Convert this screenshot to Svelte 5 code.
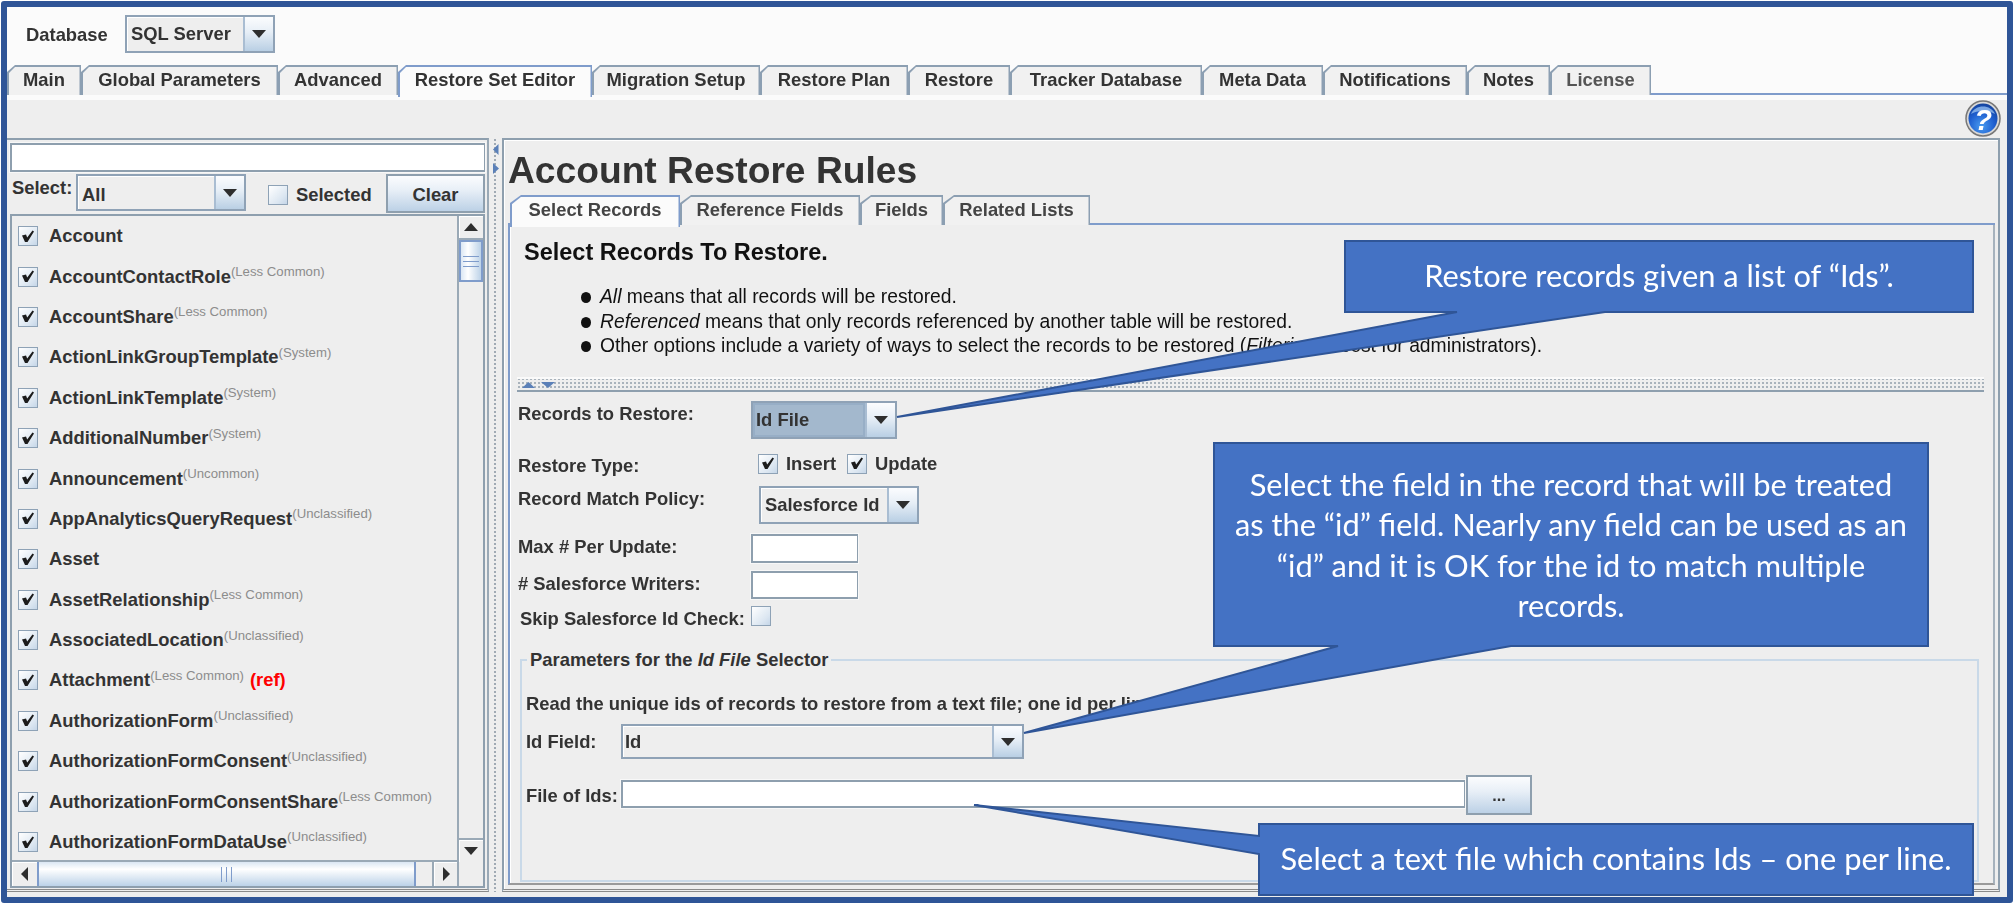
<script>
  const mainTabs = [
    ['Main', 74], ['Global Parameters', 197], ['Advanced', 120], ['Restore Set Editor', 194, 'active'],
    ['Migration Setup', 168], ['Restore Plan', 148], ['Restore', 102], ['Tracker Database', 192],
    ['Meta Data', 121], ['Notifications', 144], ['Notes', 83], ['License', 101, 'off']
  ];
  const subTabs = [['Select Records', 170, 'active'], ['Reference Fields', 180], ['Fields', 83], ['Related Lists', 147]];
  const rows = [
    ['Account', ''], ['AccountContactRole', 'Less Common'], ['AccountShare', 'Less Common'],
    ['ActionLinkGroupTemplate', 'System'], ['ActionLinkTemplate', 'System'], ['AdditionalNumber', 'System'],
    ['Announcement', 'Uncommon'], ['AppAnalyticsQueryRequest', 'Unclassified'], ['Asset', ''],
    ['AssetRelationship', 'Less Common'], ['AssociatedLocation', 'Unclassified'], ['Attachment', 'Less Common', true],
    ['AuthorizationForm', 'Unclassified'], ['AuthorizationFormConsent', 'Unclassified'],
    ['AuthorizationFormConsentShare', 'Less Common'], ['AuthorizationFormDataUse', 'Unclassified']
  ];
</script>

{#snippet check(on)}
  <span class="check">
    {#if on}
      <svg viewBox="0 0 20 20" width="20" height="20"><path d="M4 9.5 L8 8.5 L9.2 11.5 L14.5 4.5 L16 5.5 L9.5 16 L7 16 Z" fill="#1c1c1c"/></svg>
    {/if}
  </span>
{/snippet}

{#snippet arrow(dir)}
  <svg class="tri" viewBox="0 0 16 16" width="16" height="16">
    {#if dir === 'down'}<path d="M1 4 H15 L8 12 Z" />{/if}
    {#if dir === 'up'}<path d="M1 12 H15 L8 4 Z" />{/if}
    {#if dir === 'left'}<path d="M11 1 V15 L4 8 Z" />{/if}
    {#if dir === 'right'}<path d="M5 1 V15 L12 8 Z" />{/if}
  </svg>
{/snippet}

{#snippet combo(text, cls)}
  <div class="combo {cls}">
    <span class="combo-value"><span class="combo-text">{text}</span></span>
    <span class="combo-btn">{@render arrow('down')}</span>
  </div>
{/snippet}

<div class="page">
  <div class="frame">
    <div class="ui">
      <header class="dbbar">
        <span class="dblabel">Database</span>
        {@render combo('SQL Server', 'c-db')}
      </header>

      <nav class="tabs main-tabs">
        {#each mainTabs as t}
          <div class="tab {t[2] ?? ''}" style="width:{t[1]}px"><span>{t[0]}</span></div>
        {/each}
      </nav>
      <div class="whitestrip"></div>

      <div class="body">
        <div class="toolbar">
          <svg class="help" viewBox="0 0 36 37" width="36" height="37">
            <defs>
              <radialGradient id="hb" cx="0.45" cy="0.75" r="0.8">
                <stop offset="0" stop-color="#4a9cf0" />
                <stop offset="0.55" stop-color="#1f5fd0" />
                <stop offset="1" stop-color="#123f96" />
              </radialGradient>
            </defs>
            <ellipse cx="18" cy="18.5" rx="17" ry="17.5" fill="#d8d8d8" stroke="#777" stroke-width="1.5" />
            <ellipse cx="18" cy="18.5" rx="14.5" ry="15" fill="url(#hb)" />
            <path d="M6 14 C10 4 26 4 30 14 C24 10 12 10 6 14 Z" fill="#9cc4f2" opacity=".75" />
            <text x="18" y="30" text-anchor="middle" class="qmark">?</text>
          </svg>
        </div>

        <div class="panels">
          <aside class="left">
            <div class="field filter"></div>
            <div class="filter-row">
              <span class="select-label">Select:</span>
              {@render combo('All', 'c-all')}
              <label class="selected">{@render check(false)}<span>Selected</span></label>
              <button class="btn clear">Clear</button>
            </div>
            <div class="listbox">
              <div class="list">
                {#each rows as r}
                  <div class="row">
                    {@render check(true)}
                    <span class="name">{r[0]}</span>{#if r[1]}<sup class="tag">({r[1]})</sup>{/if}{#if r[2]}<b class="ref">(ref)</b>{/if}
                  </div>
                {/each}
              </div>
              <div class="vbar">
                <span class="sbtn v">{@render arrow('up')}</span>
                <span class="vthumb"><i></i></span>
                <span class="vtrack"></span>
                <span class="sbtn v">{@render arrow('down')}</span>
              </div>
              <div class="hbar">
                <span class="sbtn h">{@render arrow('left')}</span>
                <span class="hthumb"><i></i></span>
                <span class="htrack"></span>
                <span class="sbtn h">{@render arrow('right')}</span>
              </div>
              <div class="corner"></div>
            </div>
          </aside>

          <div class="vsplit">
            <svg viewBox="0 0 8 30" width="8" height="30"><path d="M6.5 0 V11 L1 5.5 Z" /><path d="M1 19 V30 L7 24.5 Z" /></svg>
          </div>

          <main class="right">
            <h1>Account Restore Rules</h1>
            <nav class="tabs sub-tabs">
              {#each subTabs as t}
                <div class="tab {t[2] ?? ''}" style="width:{t[1]}px"><span>{t[0]}</span></div>
              {/each}
            </nav>
            <section class="pane">
              <div class="intro">
                <h2>Select Records To Restore.</h2>
                <ul>
                  <li><em>All</em> means that all records will be restored.</li>
                  <li><em>Referenced</em> means that only records referenced by another table will be restored.</li>
                  <li>Other options include a variety of ways to select the records to be restored (<em>Filtering</em> is best for administrators).</li>
                </ul>
              </div>
              <div class="hsplit">
                <svg viewBox="0 0 34 8" width="34" height="8"><path d="M1 7 H14 L7.5 1 Z" /><path d="M20 1 H34 L27 7 Z" /></svg>
              </div>

              <div class="frow r1"><span class="flabel">Records to Restore:</span>{@render combo('Id File', 'c-idfile')}</div>
              <div class="frow r2">
                <span class="flabel">Restore Type:</span>
                <label class="cb first">{@render check(true)}<span>Insert</span></label>
                <label class="cb second">{@render check(true)}<span>Update</span></label>
              </div>
              <div class="frow r3"><span class="flabel">Record Match Policy:</span>{@render combo('Salesforce Id', 'c-sf')}</div>
              <div class="frow r4"><span class="flabel">Max # Per Update:</span><div class="field num"></div></div>
              <div class="frow r5"><span class="flabel">&#35; Salesforce Writers:</span><div class="field num"></div></div>
              <div class="frow r6"><span class="flabel">Skip Salesforce Id Check:</span>{@render check(false)}</div>

              <div class="group">
                <div class="legend">Parameters for the <em>Id File</em> Selector</div>
                <p class="read">Read the unique ids of records to restore from a text file; one id per line.</p>
                <div class="grow g1"><span class="glabel">Id Field:</span>{@render combo('Id', 'c-id')}</div>
                <div class="grow g2">
                  <span class="glabel">File of Ids:</span>
                  <div class="field path"></div>
                  <button class="btn dots">...</button>
                </div>
              </div>
            </section>
          </main>
        </div>
      </div>
      <div class="whitefoot"></div>
    </div>
  </div>

  <svg class="shapes" viewBox="0 0 2014 905" width="2014" height="905">
    <path d="M1345 241 H1973 V312 H1605 L897 417 L1457 312 H1345 Z" />
    <path d="M1214 443 H1928 V646 H1511 L1024 733 L1338 646 H1214 Z" />
    <path d="M1259 824 H1973 V895 H1259 V854 L974 805 L1259 836 Z" />
  </svg>
  <div class="note n1">Restore records given a list of “Ids”.</div>
  <div class="note n2">Select the field in the record that will be treated<br />as the “id” field. Nearly any field can be used as an<br />“id” and it is OK for the id to match multiple<br />records.</div>
  <div class="note n3">Select a text file which contains Ids – one per line.</div>
</div>

<style>
  :global(body) { margin: 0; background: #fff; }
  .page { position: relative; width: 2014px; height: 905px; overflow: hidden; font-family: "Liberation Sans", Arial, sans-serif; }
  .frame { box-sizing: border-box; margin: 1px 0 0 1px; width: 2011.5px; height: 902px; border: 6px solid #2f5597; border-radius: 3px; background: #fbfbfb; }
  .ui { display: flex; flex-direction: column; height: 100%; filter: blur(0.35px); font-size: 18.4px; font-weight: 700; color: #333; }

  .dbbar { height: 58px; flex: none; box-sizing: border-box; padding: 8px 0 0 19px; display: flex; align-items: flex-start; }
  .dblabel { width: 99px; line-height: 40px; }

  .combo { display: flex; box-sizing: border-box; border: 2px solid #8fa2b6; background: #eee; flex: none; }
  .combo-value { flex: 1; display: flex; align-items: center; padding-left: 4px; border-right: 2px solid #a9bdd2; box-shadow: inset 1px 1px 0 #fff; min-width: 0; }
  .combo-btn { width: 28px; flex: none; display: flex; align-items: center; justify-content: center; background: linear-gradient(#fbfcfe, #e6eef6 45%, #b9cfe4); }
  .tri { fill: #2e2e2e; display: block; }
  .c-db { width: 150px; height: 38px; }
  .c-all { width: 170px; height: 37px; }
  .c-all .combo-text { position: relative; top: 2px; }
  .c-idfile { width: 146px; height: 38px; }
  .c-idfile .combo-value { background: #a3b8cd; box-shadow: inset 0 0 0 2px #97aec6; }
  .c-idfile .combo-text { position: relative; top: 0; left: -1px; }
  .c-sf { width: 160px; height: 38px; margin-left: 8px; }
  .c-id { width: 403px; height: 35px; }
  .c-id .combo-value { padding-left: 2px; }

  .tabs { display: flex; flex: none; box-sizing: border-box; position: relative; }
  .main-tabs { height: 30px; border-bottom: 2px solid #7f9ccb; margin-top: 0; }
  .tab { position: relative; height: 30px; box-sizing: border-box; flex: none; background: #8c9fb2; clip-path: polygon(8px 0, 100% 0, 100% 100%, 0 100%, 0 7px); }
  .tab::before { content: ""; position: absolute; inset: 1.5px 1.5px 0 1.5px; background: #f1f1f1; clip-path: polygon(7px 0, 100% 0, 100% 100%, 0 100%, 0 7px); }
  .tab span { position: relative; display: block; line-height: 29px; text-align: center; white-space: nowrap; }
  .tab.active { background: #7f9ccb; height: 32px; z-index: 1; }
  .tab.active::before { background: #fbfbfb; }
  .tab.off { color: #555; }
  .whitestrip { height: 5px; flex: none; background: #fbfbfb; }

  .body { flex: 1; min-height: 0; display: flex; flex-direction: column; background: #eee; }
  .toolbar { height: 38px; flex: none; display: flex; justify-content: flex-end; padding-right: 5.5px; }
  .help { display: block; }
  .qmark { font: italic 700 29px "Liberation Sans", sans-serif; fill: #fff; }

  .panels { flex: none; height: 754px; display: flex; }
  .left { width: 482px; flex: none; box-sizing: border-box; border-top: 2px solid #8e9fae; border-right: 2px solid #9aa9b6; border-bottom: 3px double #8a8a8a; padding: 3px 2px 0 3px; background: #eee; }
  .field { box-sizing: border-box; background: #fff; border: 2px solid #8e9fae; border-right-width: 1px; border-bottom-width: 2px; box-shadow: 0 0 0 1px #f8f8f8; }
  .filter { height: 29px; }
  .filter-row { display: flex; align-items: flex-start; height: 40px; margin-top: 2px; }
  .select-label { width: 66px; padding-left: 2px; box-sizing: border-box; line-height: 22px; margin-top: 2.5px; }
  .selected { display: flex; align-items: center; margin: 10px 0 0 22px; width: 118px; gap: 8px; }
  .selected .check { margin: 0; }
  .btn { font: inherit; color: #333; box-sizing: border-box; border: 2px solid #8e9fae; background: linear-gradient(#fbfcfe, #e8eff7 40%, #bcd1e6); padding: 2px 0 0; }
  .clear { width: 99px; height: 39px; }

  .listbox { box-sizing: border-box; height: 674px; margin-top: 0; border: 2px solid #8e9fae; display: grid; grid-template-columns: 1fr 24px; grid-template-rows: 1fr 24px; }
  .list { overflow: hidden; border-right: 2px solid #9aa9b6; border-bottom: 2px solid #9aa9b6; min-height: 0; }
  .row { height: 40.4px; display: flex; align-items: center; padding-left: 6px; white-space: nowrap; }
  .check { display: block; flex: none; width: 20px; height: 20px; box-sizing: border-box; border: 1.5px solid #8ea2b6; background: linear-gradient(135deg, #fff, #dbe6f1 70%, #c5d6e8); position: relative; }
  .check svg { position: absolute; left: -1.5px; top: -1.5px; }
  .row .check { margin-right: 11px; }
  .tag { font-size: 13.2px; font-weight: 400; color: #8c8c8c; align-self: center; position: relative; top: -5px; line-height: 1; vertical-align: baseline; }
  .ref { color: #f00; margin-left: 6px; }

  .vbar { display: flex; flex-direction: column; min-height: 0; grid-row: 1; grid-column: 2; }
  .sbtn { display: flex; align-items: center; justify-content: center; flex: none; box-sizing: border-box; background: #eee; box-shadow: inset 1px 1px 0 #fff; }
  .sbtn.v { height: 24px; border: 1px solid #9aa9b6; border-width: 0 0 2px 0; }
  .vbar .sbtn.v:last-child { border-width: 2px 0 0 0; }
  .vthumb { height: 42px; flex: none; box-sizing: border-box; border: 2px solid #7f9ccb; background: linear-gradient(90deg, #dbe7f4, #fff 35%, #bcd2e8); display: flex; align-items: center; justify-content: center; }
  .vthumb i { display: block; width: 16px; height: 9px; border-top: 1px solid #7f9ccb; border-bottom: 1px solid #7f9ccb; background: linear-gradient(#7f9ccb, #7f9ccb) center/100% 1px no-repeat; }
  .vtrack { flex: 1; }
  .hbar { display: flex; grid-row: 2; grid-column: 1; border-right: 2px solid #9aa9b6; }
  .sbtn.h { width: 25px; }
  .hbar .sbtn.h:last-child { border-left: 2px solid #9aa9b6; }
  .hthumb { width: 379px; flex: none; box-sizing: border-box; border: 2px solid #7f9ccb; border-width: 0 2px; background: linear-gradient(#dbe7f4, #fff 30%, #bcd2e8); display: flex; align-items: center; justify-content: center; }
  .hthumb i { display: block; width: 9px; height: 15px; border-left: 1px solid #7f9ccb; border-right: 1px solid #7f9ccb; background: linear-gradient(#7f9ccb, #7f9ccb) center/1px 100% no-repeat; }
  .htrack { flex: 1; }
  .corner { grid-row: 2; grid-column: 2; background: #eee; }

  .vsplit { width: 13px; flex: none; padding: 6px 0 0 3px; box-sizing: border-box; background-image: radial-gradient(circle, #a0aab4 1px, transparent 1.3px); background-size: 4px 4px; background-position: 4px 0; background-repeat: repeat-y; }
  .vsplit svg { display: block; fill: #5b80b8; }

  .right { width: 1498px; flex: none; box-sizing: border-box; border: 2px solid #8e9fae; border-bottom: 3px double #8a8a8a; padding: 0 3px 0 4px; min-width: 0; box-shadow: inset 1px 1px 0 #fff; }
  h1 { margin: 0; font-size: 37.2px; line-height: 40px; padding: 10px 0 5px 0; height: 40px; color: #333; }
  .sub-tabs { height: 30px; border-bottom: 2px solid #7f9ccb; padding-left: 2px; }
  .sub-tabs .tab { color: #444; clip-path: polygon(11px 0, 100% 0, 100% 100%, 0 100%, 0 8px); }
  .sub-tabs .tab::before { clip-path: polygon(10px 0, 100% 0, 100% 100%, 0 100%, 0 8px); }
  .pane { box-sizing: border-box; height: 660px; border-left: 2px solid #7f9ccb; border-right: 2px solid #a6b2bd; border-bottom: 2px solid #9a9a9a; box-shadow: inset 1px 0 0 #fff; padding-top: 5px; }

  .intro { height: 147px; box-sizing: border-box; padding: 7px 0 0 14px; color: #111; }
  h2 { margin: 0; font-size: 23.5px; line-height: 30px; color: #111; }
  ul { margin: 18px 0 0; padding: 0 0 0 55px; list-style: none; font-weight: 400; font-size: 19.3px; line-height: 24.6px; white-space: nowrap; }
  li { position: relative; padding-left: 21px; }
  li::before { content: ""; position: absolute; left: 2px; top: 7px; width: 10px; height: 11px; border-radius: 50%; background: #111; }

  .hsplit { height: 15px; margin: 0 9px 0 7px; box-sizing: border-box; border-top: 2px solid #fafafa; border-bottom: 2px solid #8e9fae; padding: 2px 0 0 4px; background-image: radial-gradient(circle, #a9b3bc 1px, transparent 1.2px); background-size: 4px 4px; background-position: 0 2px; }
  .hsplit svg { display: block; fill: #5b80b8; }

  .frow { display: flex; align-items: flex-start; padding-left: 8px; }
  .flabel { width: 233px; flex: none; white-space: nowrap; line-height: 26px; }
  .r1 { margin-top: 9px; height: 38px; }
  .r2 { margin-top: 14px; height: 20px; }
  .r3 { margin-top: 13px; height: 38px; }
  .r4 { margin-top: 10px; height: 29px; }
  .r5 { margin-top: 8px; height: 28px; }
  .r6 { margin-top: 7px; height: 20px; }
  .r6 .flabel { padding-left: 2px; box-sizing: border-box; }
  .num { width: 107px; height: 100%; }
  .cb { display: flex; align-items: center; gap: 8px; height: 20px; position: relative; top: 0.5px; }
  .cb.first { margin-left: 7px; width: 89px; }

  .group { position: relative; box-sizing: border-box; margin: 33px 0 0 10px; width: 1459px; height: 223px; border: 2px solid #c9d9e8; padding: 0 0 0 4px; }
  .legend { position: absolute; left: 5px; top: -12px; padding: 0 3px; background: #eee; line-height: 22px; white-space: nowrap; }
  .read { margin: 0; padding-top: 32px; line-height: 22px; white-space: nowrap; }
  .grow { display: flex; align-items: flex-start; }
  .glabel { width: 95px; flex: none; }
  .g1 { margin-top: 9px; height: 35px; }
  .g1 .glabel { line-height: 35px; }
  .g2 { margin-top: 16px; height: 40px; }
  .g2 .glabel { line-height: 32px; padding-top: 5px; }
  .path { width: 844px; height: 28px; margin-top: 5px; }
  .dots { width: 66px; height: 40px; margin-left: 1px; font-size: 16px; }

  .shapes { position: absolute; left: 0; top: 0; }
  .shapes path { fill: #4472c4; stroke: #2f5597; stroke-width: 2; }
  .note { position: absolute; box-sizing: border-box; display: flex; align-items: center; justify-content: center; text-align: center; color: #fff; font-family: Lato, "Noto Sans", sans-serif; font-size: 30.8px; line-height: 40.3px; }
  .n1 { left: 1345px; top: 241px; width: 628px; height: 71px; }
  .n2 { left: 1214px; top: 444px; width: 714px; height: 203px; white-space: nowrap; }
  .n3 { left: 1259px; top: 824px; width: 714px; height: 71px; }
</style>
